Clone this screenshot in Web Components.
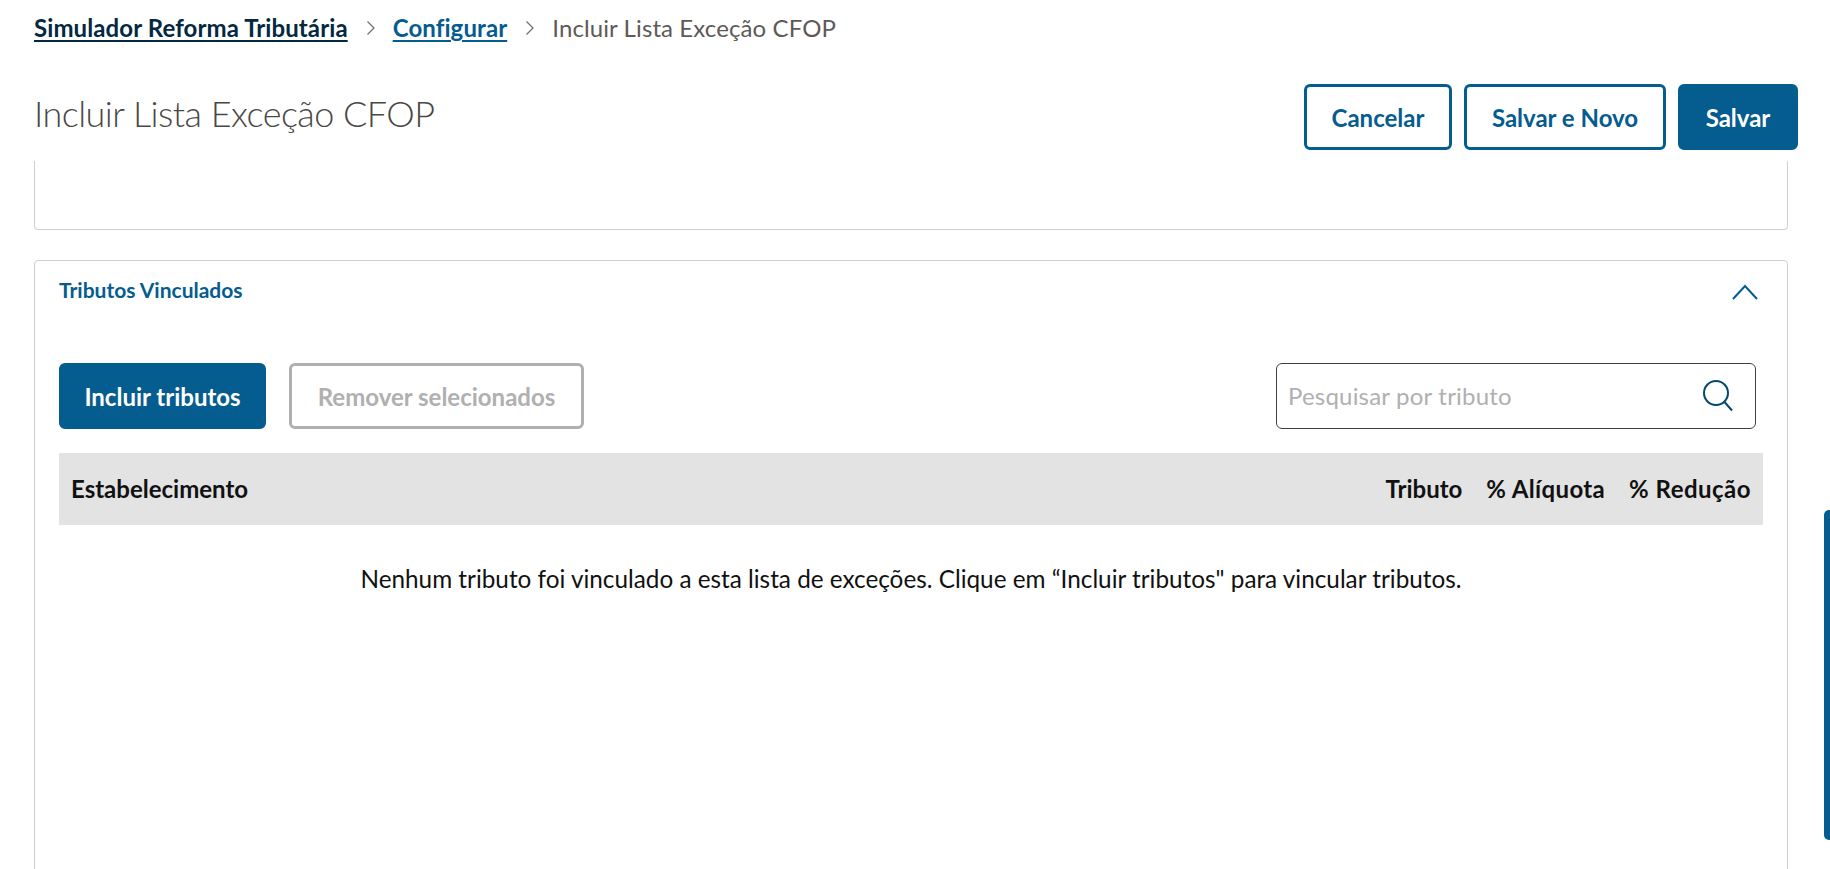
<!DOCTYPE html>
<html lang="pt-BR">
<head>
<meta charset="utf-8">
<title>Incluir Lista Exceção CFOP</title>
<style>
    html, body { margin: 0; height: 100%; overflow: hidden; background: #fff; }
    body { font-family: Lato, "Noto Sans", sans-serif; color: #000; }
</style>
</head>
<body>
<app-shell>
    <bread-crumbs slot="crumbs"></bread-crumbs>
    <page-header slot="header" title="Incluir Lista Exceção CFOP">
        <ui-button variant="outline" w="148">Cancelar</ui-button>
        <ui-button variant="outline" w="202">Salvar e Novo</ui-button>
        <ui-button variant="solid" w="120">Salvar</ui-button>
    </page-header>
    <stub-card></stub-card>
    <tax-card heading="Tributos Vinculados">
        <ui-button variant="solid" w="207">Incluir tributos</ui-button>
        <ui-button variant="disabled" w="295">Remover selecionados</ui-button>
        <search-box slot="search" placeholder="Pesquisar por tributo"></search-box>
        <tax-table slot="table"></tax-table>
    </tax-card>
</app-shell>

<script>
class AppShell extends HTMLElement {
    constructor(){
        super();
        this.attachShadow({ mode : 'open' });
    }

    connectedCallback(){
        this.shadowRoot.innerHTML = `
            <style>
                :host { display: flex; flex-direction: column; height: 869px; overflow: hidden; position: relative; }
                .top { padding: 0 32px 0 34px; flex: none; }
                .body { flex: 1; overflow: hidden; padding: 0 42px 0 34px; }
                .thumb {
                    position: absolute; right: 0; top: 510px; width: 6px; height: 330px;
                    background: #055c8f; border-radius: 5px 0 0 5px;
                }
            </style>
            <div class="top">
                <slot name="crumbs"></slot>
                <slot name="header"></slot>
            </div>
            <div class="body"><slot></slot></div>
            <div class="thumb"></div>
        `;
    }
}

class BreadCrumbs extends HTMLElement {
    constructor(){
        super();
        this.attachShadow({ mode : 'open' });
    }

    connectedCallback(){
        const chevron = `<svg width="12" height="16" viewBox="0 0 12 16" fill="none" stroke="#6b6b6b" stroke-width="1.2"><path d="M2.5 1.5 9 8l-6.5 6.5"/></svg>`;
        this.shadowRoot.innerHTML = `
            <style>
                :host { display: flex; align-items: center; height: 55px; font-size: 24px; letter-spacing: 0.1px; }
                a { font-weight: 700; text-decoration: underline; text-underline-offset: 3px; text-decoration-thickness: 2px; }
                .root { color: #03283f; }
                .link { color: #055c8f; }
                .cur { color: #5d5a57; }
                svg { margin: 0 16px 0 17px; flex: none; }
            </style>
            <a class="root">Simulador Reforma Tributária</a>${chevron}<a class="link">Configurar</a>${chevron}<span class="cur">Incluir Lista Exceção CFOP</span>
        `;
    }
}

class PageHeader extends HTMLElement {
    constructor(){
        super();
        this.attachShadow({ mode : 'open' });
    }

    connectedCallback(){
        this.shadowRoot.innerHTML = `
            <style>
                :host { display: flex; align-items: flex-start; justify-content: space-between; height: 106px; }
                h1 { margin: 36px 0 0; font-size: 36px; line-height: 44px; font-weight: 300; color: #4a4745; letter-spacing: -0.55px; }
                .actions { display: flex; gap: 12px; margin-top: 29px; }
            </style>
            <h1>${this.getAttribute('title')}</h1>
            <div class="actions"><slot></slot></div>
        `;
    }
}

class UiButton extends HTMLElement {
    constructor(){
        super();
        this.attachShadow({ mode : 'open' });
    }

    connectedCallback(){
        this.shadowRoot.innerHTML = `
            <style>
                :host {
                    display: inline-flex; align-items: center; justify-content: center;
                    box-sizing: border-box; height: 66px; width: ${this.getAttribute('w')}px;
                    border: 3px solid #055c8f; border-radius: 6px;
                    font-size: 24px; font-weight: 700;
                }
                :host([variant="outline"]) { background: #fff; color: #055c8f; }
                :host([variant="solid"]) { background: #055c8f; color: #fff; }
                :host([variant="disabled"]) { background: #fff; color: #b0b0b0; border-color: #b0b0b0; }
            </style>
            <slot></slot>
        `;
    }
}

class StubCard extends HTMLElement {
    constructor(){
        super();
        this.attachShadow({ mode : 'open' });
    }

    connectedCallback(){
        this.shadowRoot.innerHTML = `
            <style>
                :host {
                    display: block; box-sizing: border-box; height: 69px; margin-bottom: 30px;
                    border: 1px solid #cfcfcf; border-top: 0; border-radius: 0 0 4px 4px;
                }
            </style>
        `;
    }
}

class TaxCard extends HTMLElement {
    constructor(){
        super();
        this.attachShadow({ mode : 'open' });
    }

    connectedCallback(){
        this.shadowRoot.innerHTML = `
            <style>
                :host {
                    display: block; box-sizing: border-box; height: 800px;
                    border: 1px solid #cfcfcf; border-radius: 4px; padding: 0 24px;
                }
                .head { display: flex; align-items: center; justify-content: space-between; height: 58px; }
                .head span { color: #055c8f; font-size: 21px; font-weight: 700; margin-top: -2px; }
                .head svg { margin: 4px 4px 0 0; }
                .tools { display: flex; align-items: center; justify-content: space-between; margin-top: 44px; padding-right: 7px; }
                .btns { display: flex; gap: 23px; }
                .table { margin-top: 24px; }
            </style>
            <div class="head">
                <span>${this.getAttribute('heading')}</span>
                <svg width="28" height="18" viewBox="0 0 28 18" fill="none" stroke="#055c8f" stroke-width="2"><path d="M2 16 14 3l12 13"/></svg>
            </div>
            <div class="tools">
                <div class="btns"><slot></slot></div>
                <slot name="search"></slot>
            </div>
            <div class="table"><slot name="table"></slot></div>
        `;
    }
}

class SearchBox extends HTMLElement {
    constructor(){
        super();
        this.attachShadow({ mode : 'open' });
    }

    connectedCallback(){
        this.shadowRoot.innerHTML = `
            <style>
                :host {
                    display: flex; align-items: center; justify-content: space-between;
                    box-sizing: border-box; width: 480px; height: 66px; padding: 0 21px 0 11px;
                    border: 1px solid #3f3f3f; border-radius: 6px;
                    color: #b0b0b0; font-size: 24px; letter-spacing: 0.2px;
                }
                span { margin-top: -2px; }
            </style>
            <span>${this.getAttribute('placeholder')}</span>
            <svg width="32" height="34" viewBox="0 0 32 34" fill="none" stroke="#03476f" stroke-width="2"><circle cx="14" cy="14" r="12"/><path d="M22.5 23 30 31.5"/></svg>
        `;
    }
}

class TaxTable extends HTMLElement {
    constructor(){
        super();
        this.attachShadow({ mode : 'open' });
    }

    connectedCallback(){
        this.shadowRoot.innerHTML = `
            <style>
                :host { display: block; font-size: 24px; }
                .row {
                    display: flex; align-items: center; height: 72px; padding: 0 12px;
                    background: #e3e3e3; font-weight: 700; color: #111;
                }
                .row span { margin-top: -2px; }
                .first { flex: 1; }
                .tributo { margin-right: 24px; }
                .aliq { margin-right: 24px; letter-spacing: 0.35px; }
                .red { letter-spacing: 0.47px; }
                .empty { margin-top: 40px; text-align: center; font-size: 24.3px; line-height: 28px; color: #111; }
            </style>
            <div class="row">
                <span class="first">Estabelecimento</span>
                <span class="tributo">Tributo</span>
                <span class="aliq">% Alíquota</span>
                <span class="red">% Redução</span>
            </div>
            <div class="empty">Nenhum tributo foi vinculado a esta lista de exceções. Clique em “Incluir tributos" para vincular tributos.</div>
        `;
    }
}

customElements.define('app-shell', AppShell);
customElements.define('bread-crumbs', BreadCrumbs);
customElements.define('page-header', PageHeader);
customElements.define('ui-button', UiButton);
customElements.define('stub-card', StubCard);
customElements.define('tax-card', TaxCard);
customElements.define('search-box', SearchBox);
customElements.define('tax-table', TaxTable);
</script>
</body>
</html>
